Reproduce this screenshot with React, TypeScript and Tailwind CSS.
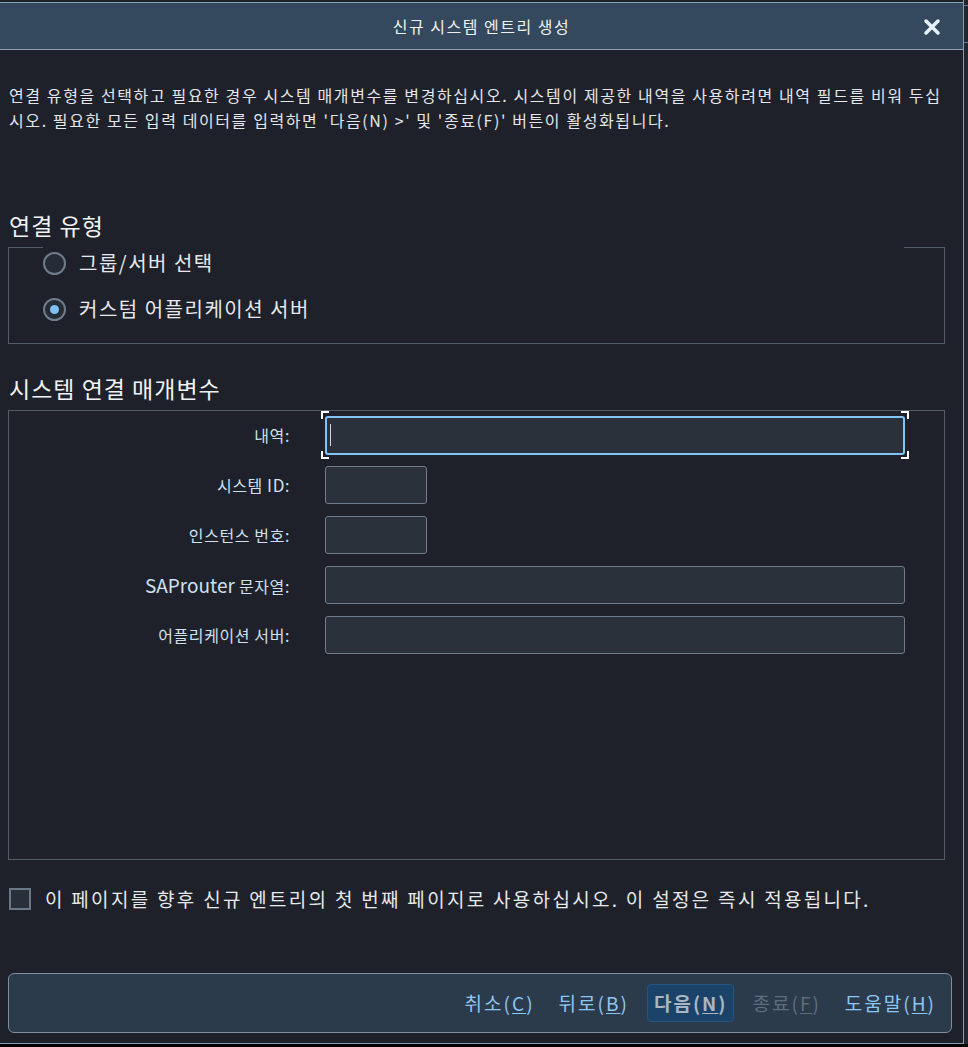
import { X } from "lucide-react"

const font = { fontFamily: '"Noto Sans CJK KR", "Noto Sans", sans-serif' }

function Radio({ label, checked }: { label: string; checked?: boolean }) {
  return (
    <div className="flex items-center gap-[13px] h-[46px]">
      <div className="w-[23px] h-[23px] rounded-full border-2 border-[#6f7c8c] bg-[#262c35] flex items-center justify-center">
        {checked && <div className="w-[9px] h-[9px] rounded-full bg-[#7ec0f7]" />}
      </div>
      <span className="text-[20px] tracking-[1.5px] text-[#e6e8eb]">{label}</span>
    </div>
  )
}

function Field({ label, width, focused }: { label: React.ReactNode; width: string; focused?: boolean }) {
  return (
    <div className="flex items-center h-[50px]">
      <div className="w-[281px] text-right text-[16px] tracking-[0.6px] text-[#cfe0f0]">{label}</div>
      <div className={`ml-[35px] relative ${width}`}>
        <div
          className={
            focused
              ? "h-[39px] rounded-[3px] border-2 border-[#84c4f5] bg-[#2a313b] flex items-center pl-[3px]"
              : "h-[38px] rounded-[3px] border border-[#6f7c8c] bg-[#2a313b]"
          }
        >
          {focused && <div className="w-px h-[22px] bg-[#d0d6dc]" />}
        </div>
        {focused && (
          <>
            <div className="absolute -left-[4px] -top-[5px] w-[8px] h-[8px] border-l-2 border-t-2 border-white" />
            <div className="absolute -left-[4px] -bottom-[4px] w-[8px] h-[8px] border-l-2 border-b-2 border-white" />
            <div className="absolute -right-[4px] -top-[5px] w-[8px] h-[8px] border-r-2 border-t-2 border-white" />
            <div className="absolute -right-[4px] -bottom-[4px] w-[8px] h-[8px] border-r-2 border-b-2 border-white" />
          </>
        )}
      </div>
    </div>
  )
}

function Btn({ text, mn, primary, disabled }: { text: string; mn: string; primary?: boolean; disabled?: boolean }) {
  const color = primary ? "text-[#aab6c2] font-bold" : disabled ? "text-[#5d6d7e]" : "text-[#8cc6f2]"
  return (
    <div
      className={`h-[38px] px-[6px] flex items-center rounded-[4px] text-[19px] tracking-[2px] ${color} ${
        primary ? "bg-[#1b4369] border border-[#24547f]" : ""
      }`}
    >
      {text}(<span className="underline underline-offset-2">{mn}</span>)
    </div>
  )
}

export default function App() {
  return (
    <div className="w-[968px] h-[1047px] bg-black flex" style={font}>
      <div className="w-[964px] h-[1044px] flex flex-col bg-[#1e2129] border-r border-b border-[#8a9bb0] pt-[2px]">
        {/* title bar */}
        <div className="h-[48px] shrink-0 bg-[#34495e] border-t border-b border-[#8da2bb] relative flex items-center justify-center">
          <span className="text-[16px] tracking-[1.5px] text-[#f0f2f4]">신규 시스템 엔트리 생성</span>
          <X className="absolute right-[19px] top-[12px] w-[24px] h-[24px] text-[#e8f0fa]" strokeWidth={3.5} />
        </div>

        <p className="mt-[33px] px-[9px] text-[16px] tracking-[1.6px] leading-[25px] text-[#e4e6ea]">
          연결 유형을 선택하고 필요한 경우 시스템 매개변수를 변경하십시오. 시스템이 제공한 내역을 사용하려면 내역 필드를 비워 두십시오. 필요한 모든 입력 데이터를 입력하면 '다음(N) &gt;' 및 '종료(F)' 버튼이 활성화됩니다.
        </p>

        <h2 className="mt-[78px] ml-[9px] text-[23px] tracking-[1px] leading-[28px] text-[#f0f2f4]">연결 유형</h2>
        <div className="ml-[8px] w-[937px] h-[97px] mt-[8px] relative border-l border-r border-b border-[#535d6a] pl-[34px] flex flex-col">
          <div className="absolute left-0 top-0 w-[34px] h-px bg-[#535d6a]" />
          <div className="absolute right-0 top-0 w-[40px] h-px bg-[#535d6a]" />
          <div className="-mt-[7px]">
            <Radio label="그룹/서버 선택" />
            <Radio label="커스텀 어플리케이션 서버" checked />
          </div>
        </div>

        <h2 className="mt-[30px] ml-[9px] text-[23px] tracking-[1px] leading-[28px] text-[#f0f2f4]">시스템 연결 매개변수</h2>
        <div className="ml-[8px] w-[937px] h-[450px] mt-[8px] border border-[#535d6a]">
          <div className="-mt-[1px]">
            <Field label="내역:" width="w-[580px]" focused />
            <Field label={<>시스템 <span className="text-[17px]">ID</span>:</>} width="w-[102px]" />
            <Field label="인스턴스 번호:" width="w-[102px]" />
            <Field label={<><span className="text-[19px] tracking-normal">SAProuter</span> 문자열:</>} width="w-[580px]" />
            <Field label="어플리케이션 서버:" width="w-[580px]" />
          </div>
        </div>

        <div className="mt-[25px] ml-[9px] flex items-center gap-[14px]">
          <div className="w-[22px] h-[22px] border-2 border-[#6b7888] bg-[#29303a]" />
          <span className="text-[19px] tracking-[2.3px] text-[#e6e8eb]">이 페이지를 향후 신규 엔트리의 첫 번째 페이지로 사용하십시오. 이 설정은 즉시 적용됩니다.</span>
        </div>

        <div className="mt-auto mb-[10px] ml-[8px] w-[944px] h-[60px] rounded-[6px] border border-[#7e8ea0] bg-[#2c3b4c] flex items-center justify-end gap-[12px] pr-[9px]">
          <Btn text="취소" mn="C" />
          <Btn text="뒤로" mn="B" />
          <Btn text="다음" mn="N" primary />
          <Btn text="종료" mn="F" disabled />
          <Btn text="도움말" mn="H" />
        </div>
      </div>
      <div className="w-[4px] h-[1044px] bg-[#22262d] flex flex-col">
        <div className="h-[5px]" />
        <div className="h-px bg-[#6a7a8c]" />
        <div className="h-[36px]" />
        <div className="h-px bg-[#6a7a8c]" />
      </div>
    </div>
  )
}
